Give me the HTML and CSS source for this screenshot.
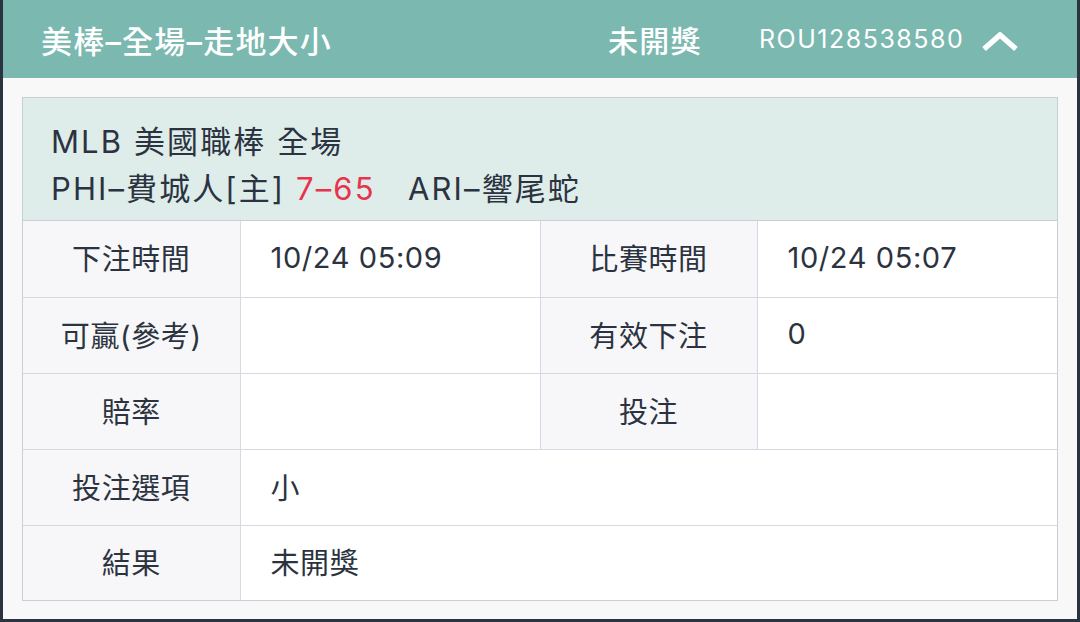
FILE: index.html
```html
<!DOCTYPE html>
<html lang="zh-Hant">
<head>
  <meta charset="UTF-8" />
  <meta name="viewport" content="width=device-width, initial-scale=1.0"/>
  <title>注單詳情</title>
  <link rel="stylesheet" href="styles.css">
</head>
<body>

  <div class="bet-panel">
    <div class="bet-head">
      <div class="bet-title">美棒–全場–走地大小</div>
      <div class="bet-status">未開獎</div>
      <div class="bet-no">ROU128538580</div>
      <svg class="bet-toggle" width="38" height="20" viewBox="0 0 38 20">
        <polyline points="3,17 19,3 35,17" fill="none" stroke="#fff" stroke-width="5.5"/>
      </svg>
    </div>

    <div class="bet-body">
      <div class="bet-card">
        <div class="match-info">
          <div>MLB 美國職棒 全場</div>
          <div>PHI–費城人[主] <span class="score">7–65</span>&nbsp;&nbsp; ARI–響尾蛇</div>
        </div>

        <table class="bet-table">
          <tr>
            <th>下注時間</th>
            <td>10/24 05:09</td>
            <th>比賽時間</th>
            <td>10/24 05:07</td>
          </tr>
          <tr>
            <th>可贏(參考)</th>
            <td></td>
            <th>有效下注</th>
            <td>0</td>
          </tr>
          <tr>
            <th>賠率</th>
            <td></td>
            <th>投注</th>
            <td></td>
          </tr>
          <tr>
            <th>投注選項</th>
            <td colspan="3">小</td>
          </tr>
          <tr>
            <th>結果</th>
            <td colspan="3">未開獎</td>
          </tr>
        </table>
      </div>
    </div>
  </div>

</body>
</html>
```

FILE: styles.css
```css
* {
  margin: 0;
  padding: 0;
  box-sizing: border-box;
  font-family: Inter, "Noto Sans CJK TC", sans-serif;
}

body {
  background: #2b3340;
  width: 1080px;
  height: 622px;
  padding: 0 3px 3px 3px;
  overflow: hidden;
}

.bet-panel {
  height: 619px;
  background: #f8f8f9;
  display: flex;
  flex-direction: column;
}

.bet-head {
  height: 78px;
  background: #7ab8b0;
  color: #fff;
  display: flex;
  align-items: center;
  padding: 0 58px 0 38px;
}

.bet-title {
  font-size: 31px;
  font-weight: 500;
  letter-spacing: 1.2px;
  flex: 1;
}

.bet-status {
  font-size: 30px;
  font-weight: 500;
  letter-spacing: 1.3px;
  width: 151px;
}

.bet-no {
  font-size: 25px;
  letter-spacing: 1.5px;
  width: 222px;
}

.bet-toggle {
  margin-top: 5px;
}

.bet-body {
  flex: 1;
  padding: 19px 19px 0 19px;
}

.bet-card {
  border: 1px solid #c9cdd8;
  background: #fff;
}

.match-info {
  background: #deecea;
  height: 123px;
  padding: 20px 0 0 28px;
  font-size: 31px;
  letter-spacing: 2.1px;
  line-height: 47px;
  color: #2c3340;
  border-bottom: 1px solid #c9cdd8;
}

.match-info .score {
  color: #e8344a;
}

.bet-table {
  width: 100%;
  border-collapse: collapse;
  table-layout: fixed;
}

.bet-table th,
.bet-table td {
  height: 76px;
  padding-bottom: 3px;
  font-size: 29px;
  font-weight: normal;
  letter-spacing: 0.6px;
  color: #2c3340;
  border: 1px solid #d6d9e2;
}

.bet-table tr:first-child th,
.bet-table tr:first-child td {
  border-top: none;
}

.bet-table tr:last-child th,
.bet-table tr:last-child td {
  border-bottom: none;
  height: 75px;
}

.bet-table th:first-child {
  border-left: none;
}

.bet-table td:last-child {
  border-right: none;
}

.bet-table th {
  background: #f7f7f9;
  text-align: center;
}

.bet-table th:first-child {
  width: 217px;
}

.bet-table td {
  width: 300px;
  text-align: left;
  padding-left: 30px;
}

.bet-table th + td + th {
  width: 217px;
}
```
